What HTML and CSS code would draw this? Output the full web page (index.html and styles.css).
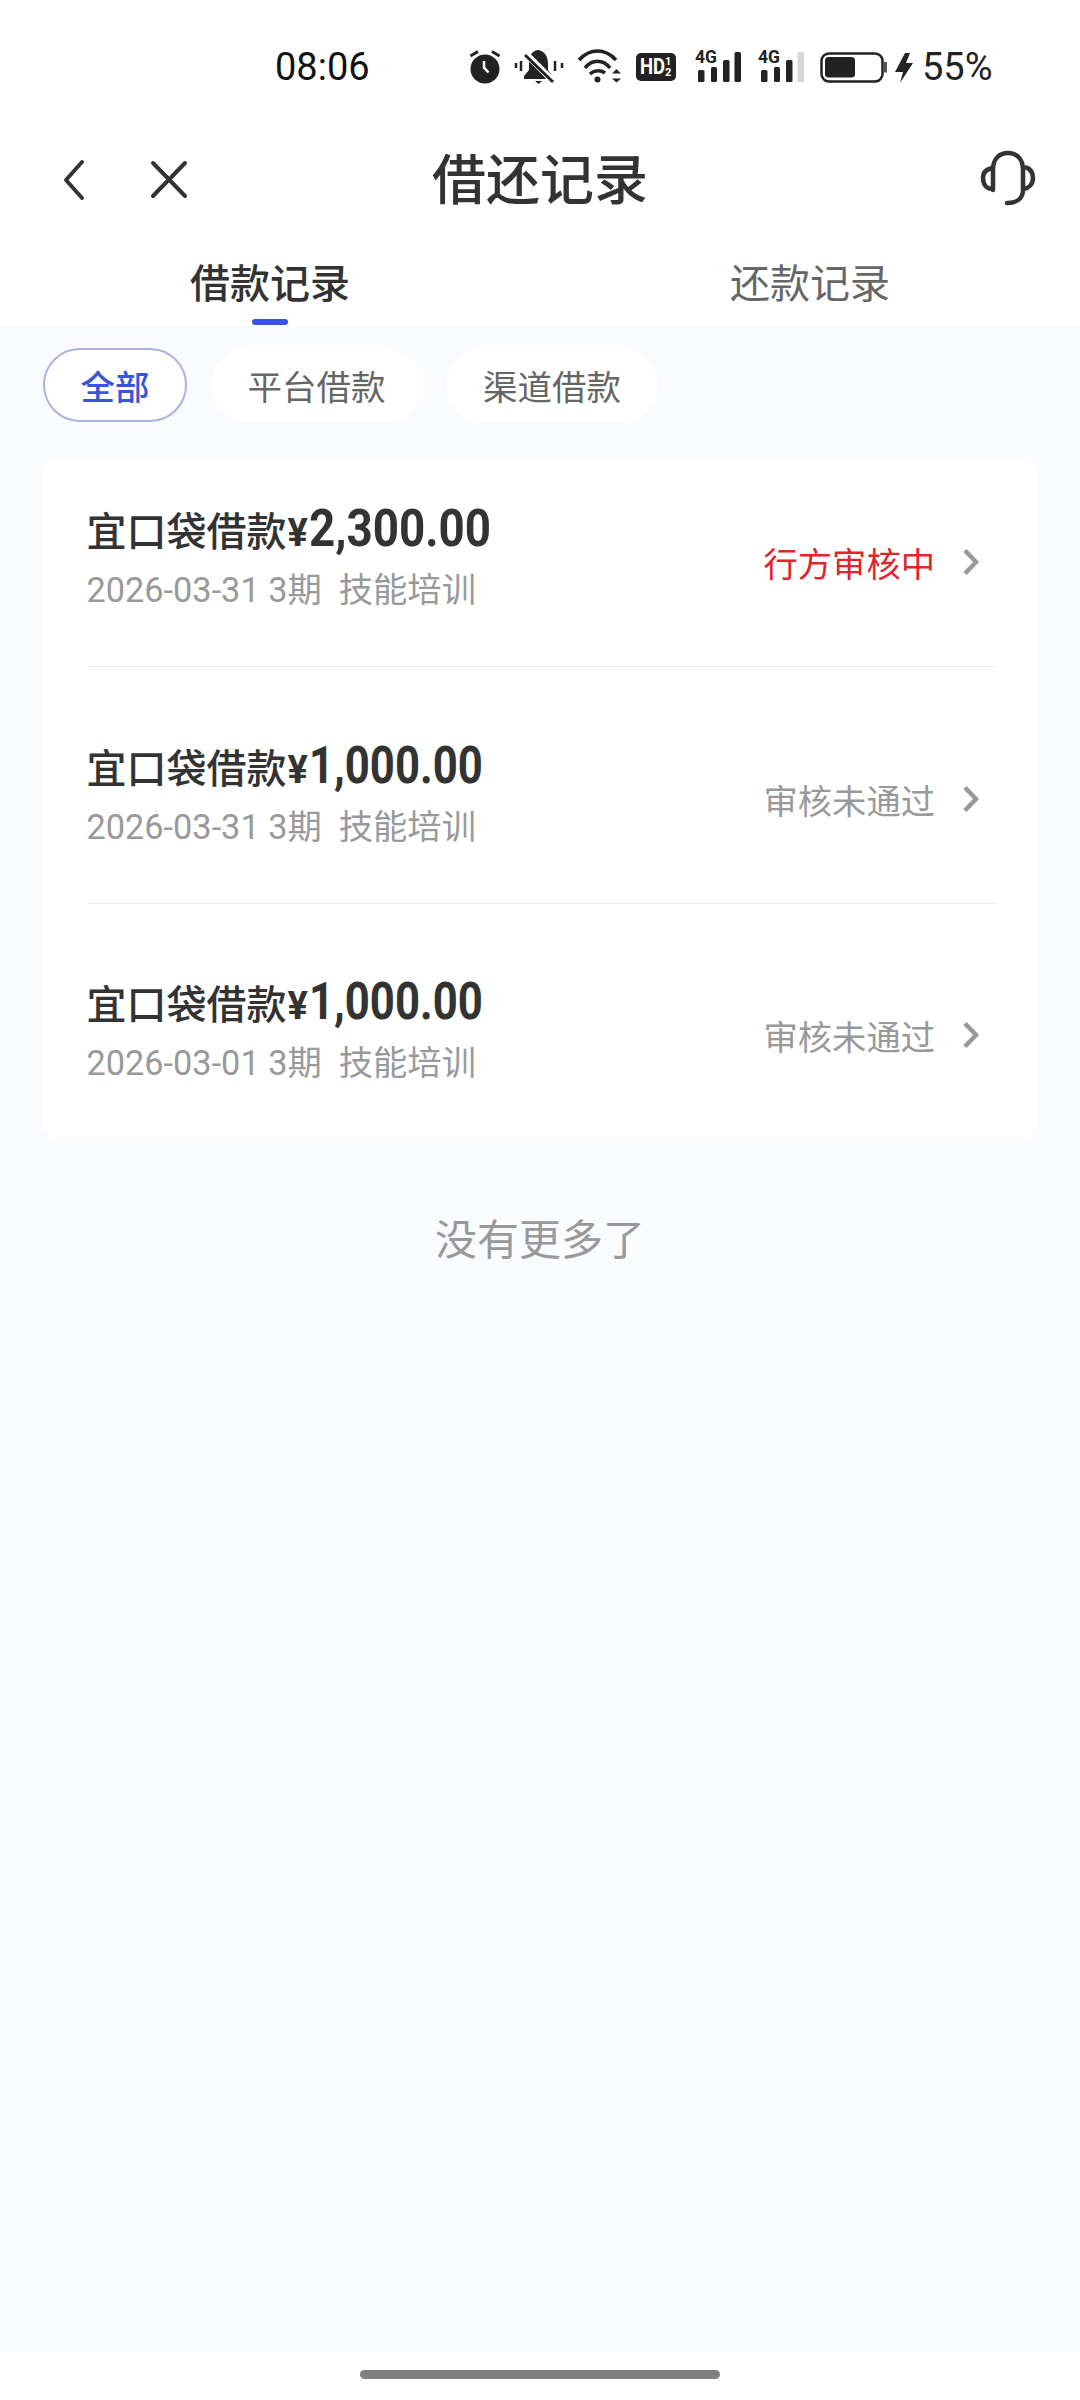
FILE: index.html
```html
<!DOCTYPE html>
<html lang="zh">
<head>
<meta charset="utf-8">
<title>借还记录</title>
<link rel="stylesheet" href="styles.css">
</head>
<body>
<div class="phone">
  <header class="top">
    <div class="status">
      <span class="time">08:06</span>
      <svg class="si m-alarm" width="34" height="36" viewBox="8 9 34 36"><circle cx="25" cy="29" r="14.500" fill="#222"/><path d="M24 21v6.500l4.500 5" fill="none" stroke="#fff" stroke-width="2.500"/><path d="M10.500 16L18 11.500M32 11.500L39.500 16" stroke="#222" stroke-width="3"/></svg>
      <svg class="si m-bell" width="54" height="36" viewBox="52 9 54 36"><path d="M78 10C71 11 69 17 69 24v6l-5 6v3h28v-3l-4-6v-6c0-7-3-13-10-14z" fill="#222"/><path d="M75 41h7l-3.500 3z" fill="#222"/><path d="M65 13l29 29" stroke="#fff" stroke-width="6.500"/><path d="M65 15l28 27" stroke="#222" stroke-width="3"/><path d="M56 23v5M61 21v10M95 21v10M102 23v5" stroke="#222" stroke-width="2.500"/></svg>
      <svg class="si m-wifi" width="48" height="36" viewBox="116 9 48 36"><path d="M119 20c11-12 26-12 37 0M125 28c7-9 18-9 25 0M130 34c4-4 11-4 15-1" fill="none" stroke="#222" stroke-width="3.500"/><circle cx="137.500" cy="39.500" r="3" fill="#222"/><path d="M152 33.500h9l-4.500-4.500zM152 38.500h9l-4.500 4z" fill="#222"/></svg>
      <span class="hd m-hd"><b class="hdt">HD</b><span class="hds">1<br>2</span></span>
      <div class="net m-n1"><span class="g">4G</span><svg class="si" width="48" height="36" viewBox="65 9 48 36"><rect x="68" y="30" width="6.500" height="12" rx="1.500" fill="#222"/><rect x="81" y="27" width="6" height="15" rx="1.500" fill="#222"/><rect x="93" y="20" width="6.500" height="22" rx="1.500" fill="#222"/><rect x="104.500" y="12" width="6.500" height="30" rx="1.500" fill="#222"/></svg></div>
      <div class="net m-n2"><span class="g">4G</span><svg class="si" width="48" height="36" viewBox="65 9 48 36"><rect x="68" y="30" width="6.500" height="12" rx="1.500" fill="#222"/><rect x="81" y="27" width="6" height="15" rx="1.500" fill="#222"/><rect x="93" y="20" width="6.500" height="22" rx="1.500" fill="#222"/><rect x="104.500" y="12" width="6.500" height="30" rx="1.500" fill="#d6d6d6"/></svg></div>
      <svg class="si m-bat" width="68" height="36" viewBox="10 9 68 36"><rect x="11.500" y="13.500" width="61" height="28" rx="7.500" fill="none" stroke="#222" stroke-width="2.500"/><rect x="15" y="17" width="30" height="20.500" rx="3.500" fill="#222"/><rect x="74" y="22" width="3" height="10.500" fill="#555"/></svg>
      <svg class="si m-bolt" width="20" height="36" viewBox="84 9 20 36"><path d="M95 13L85 32h8l-3 11 13-20h-7l4-10z" fill="#222"/></svg>
      <span class="pct">55%</span>
    </div>
    <nav class="nav">
      <div class="navl">
        <svg class="back" width="30" height="44" viewBox="0 0 30 44"><path d="M24 4L8 22l16 18" fill="none" stroke="#333" stroke-width="4" stroke-linecap="round" stroke-linejoin="round"/></svg>
        <svg class="close" width="42" height="42" viewBox="0 0 42 42"><path d="M5 4l32 33M37 4L5 37" fill="none" stroke="#333" stroke-width="4" stroke-linecap="round"/></svg>
      </div>
      <h1 class="title">借还记录</h1>
      <svg class="svc" width="56" height="56" viewBox="20 10 56 56"><path d="M33 50V30c0-12 7-17 15-17s15 5 15 17v20c0 8-6 13-16 13" fill="none" stroke="#333" stroke-width="4.500" stroke-linecap="round"/><path d="M33 28c-7 1-10 5-10 10 0 7 4 11 10 11M65 27c6 2 8 6 8 11 0 6-4 10-9 11" fill="none" stroke="#333" stroke-width="4.500"/></svg>
    </nav>
    <div class="tabs">
      <div class="tab on">借款记录<i class="bar"></i></div>
      <div class="tab">还款记录</div>
    </div>
  </header>
  <main class="main">
    <div class="chips">
      <span class="chip sel">全部</span>
      <span class="chip">平台借款</span>
      <span class="chip">渠道借款</span>
    </div>
    <section class="card">
      <div class="row line">
        <div class="info">
          <div class="name">宜口袋借款<span class="yen">¥</span><span class="amt">2,300.00</span></div>
          <div class="meta">2026-03-31 3期&nbsp;&nbsp;技能培训</div>
        </div>
        <span class="state red">行方审核中</span>
        <svg class="chev" width="18" height="28" viewBox="0 0 18 28"><path d="M3 2.500l11 11.500L3 25.500" fill="none" stroke="#999" stroke-width="4.500"/></svg>
      </div>
      <div class="row line">
        <div class="info">
          <div class="name">宜口袋借款<span class="yen">¥</span><span class="amt one">1,000.00</span></div>
          <div class="meta">2026-03-31 3期&nbsp;&nbsp;技能培训</div>
        </div>
        <span class="state">审核未通过</span>
        <svg class="chev" width="18" height="28" viewBox="0 0 18 28"><path d="M3 2.500l11 11.500L3 25.500" fill="none" stroke="#999" stroke-width="4.500"/></svg>
      </div>
      <div class="row">
        <div class="info">
          <div class="name">宜口袋借款<span class="yen">¥</span><span class="amt one">1,000.00</span></div>
          <div class="meta">2026-03-01 3期&nbsp;&nbsp;技能培训</div>
        </div>
        <span class="state">审核未通过</span>
        <svg class="chev" width="18" height="28" viewBox="0 0 18 28"><path d="M3 2.500l11 11.500L3 25.500" fill="none" stroke="#999" stroke-width="4.500"/></svg>
      </div>
    </section>
    <p class="end">没有更多了</p>
  </main>
  <footer class="foot"><span class="home"></span></footer>
</div>
</body>
</html>
```
FILE: styles.css
```css
* { box-sizing: border-box; }
html, body { margin: 0; padding: 0; }
body { font-family: "Roboto", "Noto Sans CJK SC", sans-serif; color: #333; background: #fff; }
.phone { width: 1080px; height: 2400px; display: flex; flex-direction: column; overflow: hidden; }
.top { height: 326px; background: #fff; flex: none; }
.status { height: 128px; display: flex; align-items: center; padding: 6px 0 0 275px; }
.time { font-size: 38px; line-height: 44px; color: #111; width: 193px; flex: none; }
.si { display: block; flex: none; }
.m-bell { margin-left: 10px; }
.m-wifi { margin-left: 10px; }
.m-hd { margin-left: 12px; }
.m-n1 { margin-left: 19px; }
.m-n2 { margin-left: 15px; }
.m-bat { margin-left: 14px; }
.m-bolt { margin-left: 6px; }
.hd { width: 40px; height: 28px; flex: none; background: #222; border-radius: 5px; color: #fff; display: flex; align-items: center; padding-left: 4px; }
.hdt { font: 700 22px/1 "Roboto", sans-serif; transform: scaleX(.84); transform-origin: left; width: 25px; flex: none; }
.hds { font: 700 11px/11px "Roboto", sans-serif; text-align: center; }
.net { position: relative; width: 48px; height: 36px; flex: none; }
.g { position: absolute; left: 0; top: 0; font: 700 19px/16px "Roboto", sans-serif; color: #222; transform: scaleX(.92); transform-origin: left; }
.pct { font-size: 38px; line-height: 44px; color: #222; margin-left: 8px; }
.nav { height: 104px; display: grid; grid-template-columns: 1fr auto 1fr; align-items: center; padding: 0 44px; }
.navl { display: flex; align-items: center; gap: 60px; padding-left: 14px; }
.back, .close { display: block; }
.title { margin: -6px 0 0; font: 500 54px/1 "Noto Sans CJK SC", sans-serif; color: #333; }
.svc { justify-self: end; margin-top: -4px; display: block; }
.tabs { display: grid; grid-template-columns: 1fr 1fr; height: 94px; }
.tab { position: relative; text-align: center; font: 400 40px/50px "Noto Sans CJK SC", sans-serif; color: #666; padding-top: 24px; }
.tab.on { color: #333; font-weight: 500; }
.bar { position: absolute; left: 50%; bottom: 1px; width: 36px; height: 6px; margin-left: -18px; background: #3a54db; border-radius: 3px; }
.main { flex: 1; background: #fafbff; padding: 22px 43px 0; }
.chips { display: flex; gap: 23.500px; height: 74px; }
.chip { height: 74px; padding: 0 37px; border-radius: 37px; background: #fff; font: 400 34.500px/74px "Noto Sans CJK SC", sans-serif; color: #666; }
.chip.sel { border: 2px solid #aab4e4; padding: 0 35.500px; color: #3a54db; font-weight: 500; line-height: 70px; }
.card { margin-top: 35px; background: #fff; border-radius: 14px; padding: 0 42px 0 43.500px; }
.row { display: flex; align-items: center; height: 207px; }
.row.line { height: 210px; border-bottom: 1px solid #eeeff2; margin-bottom: 27px; }
.info { flex: 1; margin-top: -7px; }
.name { font: 500 40px/48px "Noto Sans CJK SC", sans-serif; color: #333; display: flex; align-items: baseline; height: 52px; }
.yen { font: 700 38px/48px "Roboto", sans-serif; margin-left: 1px; }
.amt { font: 700 52px/48px "Roboto", sans-serif; transform: translateY(-.5px) scaleX(.88); transform-origin: left; margin-left: 1px; }
.amt.one { transform: translateY(-.5px) scaleX(.84); }
.meta { font: 400 34.300px/44px "Roboto", "Noto Sans CJK SC", sans-serif; color: #999; margin-top: 11px; }
.state { font: 400 34.300px/44px "Noto Sans CJK SC", sans-serif; color: #999; margin-right: 27px; }
.state.red { color: #e2242b; }
.chev { display: block; margin-right: 15px; }
.end { margin: 73px 0 0; text-align: center; font: 400 42px/52px "Noto Sans CJK SC", sans-serif; color: #999; }
.foot { height: 48px; flex: none; background: #fff; display: flex; justify-content: center; padding-top: 18px; }
.home { width: 360px; height: 9px; background: #7f7f7f; border-radius: 5px; }
```
